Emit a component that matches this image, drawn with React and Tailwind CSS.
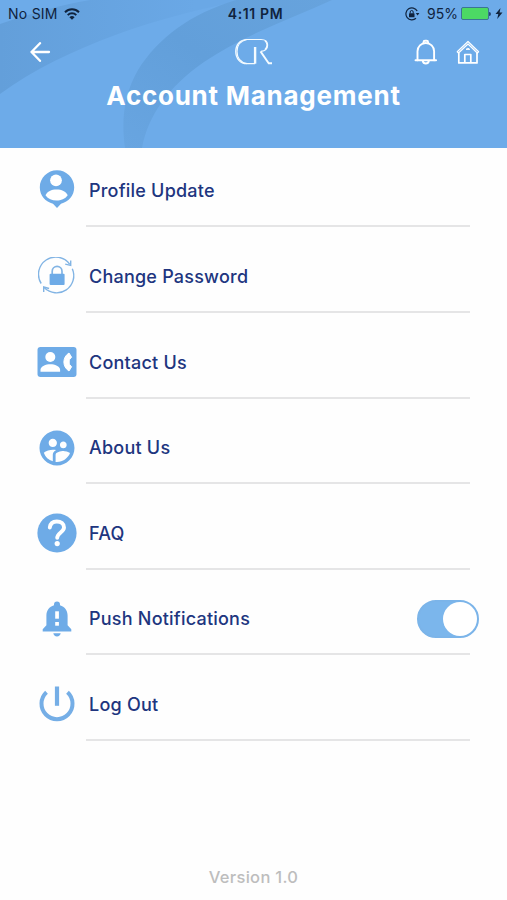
import React, { useState } from 'react';
import { MdSupervisedUserCircle } from 'react-icons/md';

function ProfilePinIcon() {
  return (
    <svg className="-mt-1" width="36" height="40" viewBox="0 0 36 40">
      <path d="M18 1.300C8.600 1.300 .8 8.900 .8 18.300c0 8.600 5.800 14.600 13.200 16.500L18 39l4-4.200c7.400-1.900 13.200-7.900 13.200-16.500C35.200 8.900 27.400 1.300 18 1.300z" fill="#6eabe7" />
      <circle cx="17" cy="11.300" r="5.900" fill="#fff" />
      <path d="M6.500 26.300c1.600-4 6-5.900 11-5.900s9.600 1.900 11.200 5.900c-2.600 3.700-6.700 5.200-11.200 5.200s-8.400-1.500-11-5.200z" fill="#fff" />
    </svg>
  );
}

function PasswordIcon() {
  return (
    <svg width="38" height="38" viewBox="0 0 38 38" fill="none" stroke="#82b4e4" strokeWidth="1.400">
      <path d="M3.200 26.500A17.200 17.200 0 0 1 31.800 7.400" />
      <path d="M34.300 11.700A17.200 17.200 0 0 1 6.400 30.800" />
      <path d="M32.700 3.600v4.800l-5.500-1.300" />
      <path d="M5.700 35v-5l5.400 1.500" />
      <path d="M14.200 17.500v-3.300a4.900 4.900 0 0 1 9.800 0v3.300" strokeWidth="1.700" />
      <rect x="11.600" y="16.700" width="15" height="11.300" rx="1" fill="#6eabe7" stroke="none" />
    </svg>
  );
}

function ContactIcon() {
  return (
    <svg width="40" height="30" viewBox="0 0 40 30">
      <rect x=".5" width="39" height="30" rx="3" fill="#6eabe7" />
      <circle cx="13.300" cy="10" r="5" fill="#fff" />
      <path d="M3.500 24.800v-2c0-3.500 5.400-5.500 9.800-5.500s9.800 2 9.800 5.500v2z" fill="#fff" />
      <path d="M32 6l2.600 4.200-2 2.300c-.6 1.800-.6 3.200 0 5l2 2.300L32 24c-6.800-4.200-6.800-13.800 0-18z" fill="#fff" stroke="#fff" strokeWidth="1" strokeLinejoin="round" />
    </svg>
  );
}

function HelpIcon() {
  return (
    <svg width="40" height="40" viewBox="0 0 40 40" fill="none">
      <circle cx="20" cy="20" r="19.600" fill="#6eabe7" />
      <path d="M12.800 14.500c.5-4 3.300-6 7-6 4.200 0 7.200 2.300 7.200 6 0 4.800-6.800 5.100-6.800 10.300" stroke="#fff" strokeWidth="3.900" strokeLinecap="round" />
      <circle cx="20.200" cy="30.600" r="2.600" fill="#fff" />
    </svg>
  );
}

function PushIcon() {
  return (
    <svg width="30" height="36" viewBox="0 0 30 36" fill="#6eabe7">
      <path d="M15 .5a3 3 0 0 0-3 3v.8C7.300 5.700 4.400 9.500 4.400 14.500v9.800L.7 28.200v2.300h28.600v-2.300l-3.700-3.900v-9.800c0-5-2.900-8.800-7.600-10.200v-.8a3 3 0 0 0-3-3z" />
      <path d="M11.300 32.300h7.400c-.3 2-1.700 3.200-3.700 3.200s-3.400-1.200-3.700-3.200z" />
      <rect x="13.200" y="10.300" width="3.700" height="7.400" fill="#fff" />
      <rect x="13.200" y="21" width="3.700" height="3.700" fill="#fff" />
    </svg>
  );
}

function PowerIcon() {
  return (
    <svg width="36" height="36" viewBox="0 0 36 36" fill="none" stroke="#75aee6" strokeWidth="4">
      <path d="M18 .5v19.300" strokeWidth="4.200" />
      <path d="M7.500 6.300a15.500 15.500 0 1 0 21 0" />
    </svg>
  );
}

function Logo() {
  return (
    <svg width="40" height="30" viewBox="0 0 40 30" fill="none" stroke="#f4fbff" strokeWidth="1.200" aria-label="GR">
      <path d="M13 2.500h14c4 0 6.600 2 6.600 5.600 0 3.400-2.300 5.900-6.600 6.300" />
      <path d="M13 2.500C5.800 2.500 1.700 8 1.700 14.500S5.800 26.700 13 26.700h7.500V10" />
      <path d="M13 2.500C6.600 3.800 3 8.300 3 14.500s3.600 10.900 10 12.200" />
      <path d="M21.500 10v16.700" strokeWidth="1.600" />
      <path d="M26.500 14.400l8.200 11.800H38" strokeWidth="1.900" />
      <path d="M31 3.700c2.700 2.500 2.700 6.300 0 8.800" />
    </svg>
  );
}

function BellIcon() {
  return (
    <svg width="24" height="26" viewBox="0 0 24 26" fill="none" stroke="#fff" strokeWidth="1.900" strokeLinecap="round" strokeLinejoin="round">
      <path d="M1.500 21.300h20.600" />
      <path d="M3.500 21.300V12.300a8.300 8.300 0 0 1 16.600 0v9" />
      <path d="M9.500 4.200V3.200A1.500 1.500 0 0 1 11 1.700h1.600a1.500 1.500 0 0 1 1.500 1.500v1" />
      <path d="M8.800 22c.3 1.600 1.400 2.500 3 2.500s2.700-.9 3-2.500" />
    </svg>
  );
}

function HomeIcon() {
  return (
    <svg width="24" height="26" viewBox="0 0 24 26" fill="none" stroke="#fff" strokeWidth="1.700" strokeLinejoin="round">
      <path d="M1.200 12.800L12 2.500l10.600 10.300-1.300 1.200L12 5l-9.500 9z" strokeWidth="1.200" />
      <path d="M2.800 14v9.900h18.200V14" />
      <path d="M8.800 24v-8.500h6V24" />
      <path d="M10 10.400l1.900-1.200 1.900 1.200z" strokeWidth="1" />
    </svg>
  );
}

function StatusBar() {
  return (
    <div className="grid h-[27px] grid-cols-3 items-center pl-2 pr-1 text-[14px] text-[#10233d]">
      <div className="flex items-center gap-[6px]">
        <span className="tracking-[0.250px]">No SIM</span>
        <svg width="16" height="12" viewBox="0 0 16 12" fill="none" stroke="currentColor" strokeWidth="2">
          <path d="M1 4.200a10 10 0 0 1 14 0" />
          <path d="M3.700 7.100a6.200 6.200 0 0 1 8.600 0" />
          <path d="M8 11.800L5.400 9.200a3.700 3.700 0 0 1 5.200 0z" fill="currentColor" stroke="none" />
        </svg>
      </div>
      <div className="text-center text-[14px] font-semibold tracking-[0.600px]">4:11 PM</div>
      <div className="flex items-center justify-end">
        <svg className="mr-[7px]" width="15" height="14" viewBox="0 0 15 14" fill="none" stroke="currentColor">
          <path d="M12.200 4A6 6 0 1 0 11 11.300" strokeWidth="1.200" />
          <path d="M10.800 6h3.600l-1.800 2.500z" fill="currentColor" stroke="none" />
          <rect x="4" y="6.300" width="5.500" height="4" rx=".5" fill="currentColor" stroke="none" />
          <path d="M5.200 6.500V5a1.500 1.500 0 0 1 3 0v1.500" />
        </svg>
        <span className="mr-[3px]">95%</span>
        <div className="h-[13px] w-7 rounded-[2px] border border-[#3b7593] bg-[#4cd964]" />
        <div className="h-1 w-[2px] rounded-r bg-[#27496f]" />
        <svg className="ml-[4px]" width="8" height="11" viewBox="0 0 8 11">
          <path d="M5.500 0L.5 6h2.800L2.200 11 7.500 4.600H4.600z" fill="currentColor" />
        </svg>
      </div>
    </div>
  );
}

function Header() {
  return (
    <header className="relative h-[148px] overflow-hidden bg-[#6dabe9]">
      <svg className="absolute inset-0" width="507" height="148" viewBox="0 0 507 148">
        <defs>
          <linearGradient id="sweep" x1="0" y1="0" x2="1" y2="0">
            <stop offset="0" stopColor="#639fda" />
            <stop offset="0.800" stopColor="#6aa8e6" />
            <stop offset="1" stopColor="#6aa8e6" />
          </linearGradient>
          <linearGradient id="band" x1="0" y1="1" x2="1" y2="0">
            <stop offset="0" stopColor="#68a5e1" />
            <stop offset="0.500" stopColor="#629fda" />
            <stop offset="1" stopColor="#67a3dd" />
          </linearGradient>
        </defs>
        <path d="M0 24C35 12 60 5 90 0H245C160 16 66 46 0 94z" fill="url(#sweep)" />
        <path d="M332 0H236C190 14 158 38 138 70c-14 24-17 50-13 78h17c6-32 26-61 62-86 38-26 86-43 128-62z" fill="url(#band)" />
      </svg>
      <div className="relative">
        <StatusBar />
        <div className="grid h-[50px] grid-cols-3 items-center pl-[29px] pr-[27px]">
          <svg width="22" height="20" viewBox="0 0 22 20" fill="none" stroke="#fff" strokeWidth="2.300" strokeLinecap="round" strokeLinejoin="round">
            <path d="M20 10H2.500M11 1.200L2.500 10l8.500 8.800" />
          </svg>
          <div className="flex justify-center">
            <Logo />
          </div>
          <div className="flex justify-end gap-[18px]">
            <BellIcon />
            <HomeIcon />
          </div>
        </div>
        <h1 className="mt-0.5 text-center text-[26px] leading-[34px] font-bold tracking-[0.750px] text-white">Account Management</h1>
      </div>
    </header>
  );
}

const menuItems = [
  { label: 'Profile Update', icon: <ProfilePinIcon /> },
  { label: 'Change Password', icon: <PasswordIcon /> },
  { label: 'Contact Us', icon: <ContactIcon /> },
  { label: 'About Us', icon: <MdSupervisedUserCircle size={42} /> },
  { label: 'FAQ', icon: <HelpIcon /> },
  { label: 'Push Notifications', icon: <PushIcon />, toggle: true },
  { label: 'Log Out', icon: <PowerIcon /> },
];

export default function App() {
  const [pushEnabled, setPushEnabled] = useState(true);

  return (
    <div className="flex h-[900px] w-[507px] flex-col bg-[#fefefe] font-['Inter',sans-serif]">
      <Header />
      <ul className="flex flex-col gap-[12.600px] pt-[6.400px]">
        {menuItems.map(item => (
          <li key={item.label} className="flex h-[73px] items-stretch pl-[28px] pr-[37px]">
            <div className="flex w-[58px] shrink-0 items-center justify-center text-[#6eabe7]">{item.icon}</div>
            <div className="flex flex-1 items-center justify-between border-b-2 border-[#e5e5e6] pl-[3px] pt-[2px]">
              <span className="text-[18px] font-medium tracking-[0.220px] text-[#20357f]">{item.label}</span>
              {item.toggle && (
                <button
                  onClick={() => setPushEnabled(!pushEnabled)}
                  aria-pressed={pushEnabled}
                  className={`-mr-[9px] flex h-[38px] w-[62px] items-center rounded-full border-2 border-[#7bb4e9] bg-[#7bb6ec] ${pushEnabled ? 'justify-end' : 'justify-start'}`}
                >
                  <span className="size-[34px] rounded-full bg-white" />
                </button>
              )}
            </div>
          </li>
        ))}
      </ul>
      <footer className="mt-auto pb-[11px] text-center text-[16.500px] leading-[24px] font-medium tracking-[0.300px] text-[#bdbdbd]">Version 1.0</footer>
    </div>
  );
}
